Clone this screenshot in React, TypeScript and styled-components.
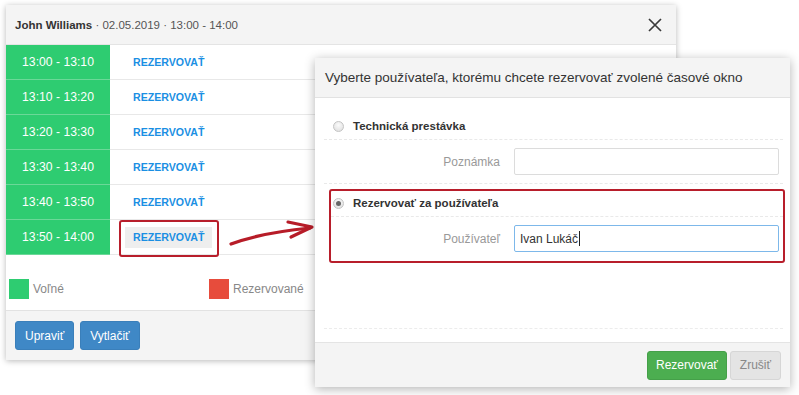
import React from 'react';
import styled, { createGlobalStyle, css } from 'styled-components';

const GlobalStyle = createGlobalStyle`
  html, body {
    margin: 0;
    padding: 0;
    background: #fff;
  }
  body {
    font-family: "Liberation Sans", Arial, sans-serif;
    color: #333;
  }
  * {
    box-sizing: border-box;
  }
`;

const Canvas = styled.div`
  position: relative;
  width: 799px;
  height: 395px;
  overflow: hidden;
  padding: 5px 0 0 6px;
`;

const SchedulePanel = styled.div`
  width: 670px;
  background: #fff;
  box-shadow: 0 1px 6px rgba(0, 0, 0, 0.28);
`;

const PanelHeader = styled.div`
  height: 40px;
  display: flex;
  align-items: center;
  justify-content: space-between;
  padding: 0 13px 0 9px;
  background: #f4f4f4;
  border-bottom: 1px solid #e4e4e4;
  font-size: 11.5px;
  color: #555;
`;

const Owner = styled.b`
  color: #333;
`;

const CloseButton = styled.span`
  display: flex;
  width: 16px;
  height: 16px;
  color: #3a3a3a;
`;

const SlotRow = styled.div`
  display: flex;
  height: 35px;
  &:last-of-type {
    height: 34px;
  }
`;

const TimeCell = styled.div`
  width: 104px;
  display: flex;
  align-items: center;
  justify-content: center;
  background: #2ecc71;
  color: #fff;
  font-size: 12.2px;
  border-bottom: 1px solid #6bd898;
  ${SlotRow}:last-of-type & {
    border-bottom: none;
  }
`;

const ActionCell = styled.div`
  flex: 1;
  display: flex;
  align-items: center;
  padding-left: 15px;
  border-bottom: 1px solid #e8e8e8;
  ${SlotRow}:last-of-type & {
    border-bottom: none;
  }
`;

const ReserveLink = styled.span<{ $marked?: boolean }>`
  position: relative;
  display: inline-flex;
  align-items: center;
  height: 21px;
  padding: 0 8px;
  font-size: 10.6px;
  font-weight: bold;
  color: #1a8fe3;
  ${(p) =>
    p.$marked &&
    css`
      background: #eeeeee;
      &::after {
        content: '';
        position: absolute;
        left: -6px;
        right: -7px;
        top: -7px;
        bottom: -9px;
        border: 2.5px solid #b81e2b;
        border-radius: 3px;
      }
    `}
`;

const Legend = styled.div`
  display: flex;
  height: 56px;
  align-items: center;
  padding: 13px 0 0 3px;
  border-bottom: 1px solid #e2e2e2;
`;

const LegendItem = styled.div`
  width: 200px;
  display: flex;
  align-items: center;
  gap: 4px;
  font-size: 12px;
  color: #888;
`;

const Swatch = styled.span<{ $color: string }>`
  width: 20px;
  height: 20px;
  background: ${(p) => p.$color};
`;

const PanelFooter = styled.div`
  display: flex;
  gap: 6px;
  height: 49px;
  padding: 10px 9px;
  background: #f4f4f4;
`;

const Button = styled.button<{ $variant: 'primary' | 'success' | 'muted' }>`
  height: 29px;
  padding: 0 9px;
  font-family: inherit;
  font-size: 12px;
  border-radius: 3px;
  border: 1px solid transparent;
  ${(p) =>
    p.$variant === 'primary' &&
    css`
      background: #3f88c6;
      border-color: #3a7fba;
      color: #fff;
    `}
  ${(p) =>
    p.$variant === 'success' &&
    css`
      background: #4cae50;
      border-color: #45a049;
      color: #fff;
      padding: 0 8px;
    `}
  ${(p) =>
    p.$variant === 'muted' &&
    css`
      background: #e4e4e4;
      border-color: #d6d6d6;
      color: #888;
      padding: 0 9px;
    `}
`;

const Modal = styled.div`
  position: absolute;
  left: 315px;
  top: 58px;
  width: 475px;
  height: 329px;
  display: flex;
  flex-direction: column;
  background: #fff;
  box-shadow: 0 2px 10px rgba(0, 0, 0, 0.3);
`;

const ModalHeader = styled.div`
  height: 40px;
  display: flex;
  align-items: center;
  padding-left: 10px;
  background: #f4f4f4;
  border-bottom: 1px solid #e2e2e2;
  font-size: 13.5px;
  color: #333;
`;

const ModalBody = styled.div`
  flex: 1;
  padding: 0 7px 9px 9px;
`;

const OptionRow = styled.div<{ $top?: number; $left?: number }>`
  display: flex;
  align-items: center;
  gap: 9px;
  height: ${(p) => (p.$top ?? 21) + 21}px;
  padding: ${(p) => p.$top ?? 21}px 0 6px ${(p) => p.$left ?? 9}px;
  border-bottom: 1px dashed #e9e9e9;
  font-size: 11.5px;
  font-weight: bold;
  color: #333;
`;

const Radio = styled.span<{ $checked?: boolean }>`
  position: relative;
  width: 11px;
  height: 11px;
  border-radius: 50%;
  border: 1px solid #c4c4c4;
  background: radial-gradient(circle at 50% 35%, #fbfbfb 0%, #dcdcdc 100%);
  ${(p) =>
    p.$checked &&
    css`
      &::after {
        content: '';
        position: absolute;
        left: 2px;
        top: 2px;
        width: 5px;
        height: 5px;
        border-radius: 50%;
        background: #666;
      }
    `}
`;

const FieldRow = styled.div<{ $last?: boolean }>`
  display: flex;
  align-items: center;
  gap: 14px;
  padding: 8px 0 ${(p) => (p.$last ? 9 : 8)}px;
  ${(p) => !p.$last && 'border-bottom: 1px dashed #e9e9e9;'}
`;

const FieldLabel = styled.label<{ $width: number }>`
  width: ${(p) => p.$width}px;
  text-align: right;
  font-size: 12px;
  color: #999;
`;

const TextInput = styled.div<{ $focused?: boolean }>`
  width: 265px;
  height: 27px;
  display: flex;
  align-items: center;
  padding-left: 5px;
  border-radius: 2px;
  border: 1px solid ${(p) => (p.$focused ? '#7db8ea' : '#dcdcdc')};
  font-size: 12px;
  color: #333;
`;

const Caret = styled.span`
  display: inline-block;
  width: 1px;
  height: 15px;
  margin-left: 1px;
  background: #222;
`;

const Highlight = styled.div`
  margin: 5px -2px 0 5px;
  border: 2.5px solid #b81e2b;
  border-radius: 3px;
`;

const BodySpacer = styled.div`
  height: 66px;
  border-bottom: 1px dashed #ececec;
`;

const ModalFooter = styled.div`
  height: 45px;
  display: flex;
  justify-content: flex-end;
  align-items: center;
  gap: 3px;
  padding: 0 9px;
  background: #f4f4f4;
  border-top: 1px solid #e4e4e4;
`;

const Arrow = styled.svg`
  position: absolute;
  left: 220px;
  top: 210px;
  overflow: visible;
`;

const slots = [
  '13:00 - 13:10',
  '13:10 - 13:20',
  '13:20 - 13:30',
  '13:30 - 13:40',
  '13:40 - 13:50',
  '13:50 - 14:00',
];

export default function App() {
  return (
    <Canvas>
      <GlobalStyle />
      <SchedulePanel>
        <PanelHeader>
          <span>
            <Owner>John Williams</Owner> · 02.05.2019 · 13:00 - 14:00
          </span>
          <CloseButton>
            <svg width="16" height="16" viewBox="0 0 16 16">
              <path d="M2 2 L14 14 M14 2 L2 14" stroke="currentColor" strokeWidth="1.7" />
            </svg>
          </CloseButton>
        </PanelHeader>
        {slots.map((slot, i) => (
          <SlotRow key={slot}>
            <TimeCell>{slot}</TimeCell>
            <ActionCell>
              <ReserveLink $marked={i === slots.length - 1}>REZERVOVAŤ</ReserveLink>
            </ActionCell>
          </SlotRow>
        ))}
        <Legend>
          <LegendItem>
            <Swatch $color="#2ecc71" />
            Voľné
          </LegendItem>
          <LegendItem>
            <Swatch $color="#e74c3c" />
            Rezervované
          </LegendItem>
        </Legend>
        <PanelFooter>
          <Button $variant="primary">Upraviť</Button>
          <Button $variant="primary">Vytlačiť</Button>
        </PanelFooter>
      </SchedulePanel>

      <Arrow width="100" height="40">
        <path d="M11 34 Q 40 23 90 18" fill="none" stroke="#b71c28" strokeWidth="3.2" strokeLinecap="round" />
        <path d="M68 12 L92 17 L71 27" fill="none" stroke="#b71c28" strokeWidth="3.2" strokeLinecap="round" strokeLinejoin="round" />
      </Arrow>

      <Modal>
        <ModalHeader>Vyberte používateľa, ktorému chcete rezervovať zvolené časové okno</ModalHeader>
        <ModalBody>
          <OptionRow>
            <Radio />
            Technická prestávka
          </OptionRow>
          <FieldRow>
            <FieldLabel $width={176}>Poznámka</FieldLabel>
            <TextInput />
          </FieldRow>
          <Highlight>
            <OptionRow $top={5} $left={2}>
              <Radio $checked />
              Rezervovať za používateľa
            </OptionRow>
            <FieldRow $last>
              <FieldLabel $width={169}>Používateľ</FieldLabel>
              <TextInput $focused>
                Ivan Lukáč
                <Caret />
              </TextInput>
            </FieldRow>
          </Highlight>
          <BodySpacer />
        </ModalBody>
        <ModalFooter>
          <Button $variant="success">Rezervovať</Button>
          <Button $variant="muted">Zrušiť</Button>
        </ModalFooter>
      </Modal>
    </Canvas>
  );
}
